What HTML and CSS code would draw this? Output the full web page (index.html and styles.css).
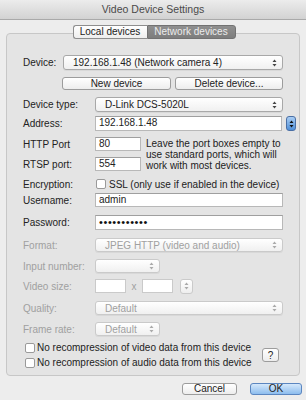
FILE: index.html
```html
<!DOCTYPE html>
<html lang="en">
<head>
  <meta charset="UTF-8" />
  <title>Video Device Settings</title>
  <link rel="stylesheet" href="styles.css">
</head>
<body>
  <div class="titlebar">Video Device Settings</div>

  <div class="panel">
    <div class="tabs">
      <span class="tab tab-local">Local devices</span><span class="tab tab-net selected">Network devices</span>
    </div>

    <div class="row r-device">
      <span class="lbl lbl-short">Device:</span>
      <div class="popup">192.168.1.48 (Network camera 4)<svg class="arrows" width="5" height="8" viewBox="0 0 5 8"><path d="M2.5 0.5 4.5 3H0.5Z M2.5 7.5 4.5 5H0.5Z"/></svg></div>
    </div>

    <div class="row r-buttons">
      <button class="btn btn-new">New device</button>
      <button class="btn btn-del">Delete device...</button>
    </div>

    <div class="row r-type">
      <span class="lbl">Device type:</span>
      <div class="popup">D-Link DCS-5020L<svg class="arrows" width="5" height="8" viewBox="0 0 5 8"><path d="M2.5 0.5 4.5 3H0.5Z M2.5 7.5 4.5 5H0.5Z"/></svg></div>
    </div>

    <div class="row r-address">
      <span class="lbl">Address:</span>
      <div class="field grow">192.168.1.48</div>
      <span class="stepper blue"><svg width="5" height="8" viewBox="0 0 5 8"><path d="M2.5 0.5 4.5 3H0.5Z M2.5 7.5 4.5 5H0.5Z"/></svg></span>
    </div>

    <div class="ports">
      <div class="port-rows">
        <div class="row r-http">
          <span class="lbl">HTTP Port</span>
          <div class="field port">80</div>
        </div>
        <div class="row r-rtsp">
          <span class="lbl">RTSP port:</span>
          <div class="field port">554</div>
        </div>
      </div>
      <p class="help">Leave the port boxes empty to use standard ports, which will work with most devices.</p>
    </div>

    <div class="row r-enc">
      <span class="lbl">Encryption:</span>
      <span class="check"></span>
      <span>SSL (only use if enabled in the device)</span>
    </div>

    <div class="row r-user">
      <span class="lbl">Username:</span>
      <div class="field grow">admin</div>
    </div>

    <div class="row r-pass">
      <span class="lbl">Password:</span>
      <div class="field grow dots">&#8226;&#8226;&#8226;&#8226;&#8226;&#8226;&#8226;&#8226;&#8226;&#8226;&#8226;</div>
    </div>

    <div class="row r-format off">
      <span class="lbl">Format:</span>
      <div class="popup">JPEG HTTP (video and audio)<svg class="arrows" width="5" height="8" viewBox="0 0 5 8"><path d="M2.5 0.5 4.5 3H0.5Z M2.5 7.5 4.5 5H0.5Z"/></svg></div>
    </div>

    <div class="row r-input off">
      <span class="lbl">Input number:</span>
      <div class="popup short"><span></span><svg class="arrows" width="5" height="8" viewBox="0 0 5 8"><path d="M2.5 0.5 4.5 3H0.5Z M2.5 7.5 4.5 5H0.5Z"/></svg></div>
    </div>

    <div class="row r-size off">
      <span class="lbl">Video size:</span>
      <div class="field size"></div>
      <span class="times">x</span>
      <div class="field size"></div>
      <span class="stepper"><svg width="5" height="8" viewBox="0 0 5 8"><path d="M2.5 0.5 4.5 3H0.5Z M2.5 7.5 4.5 5H0.5Z"/></svg></span>
    </div>

    <div class="row r-quality off">
      <span class="lbl">Quality:</span>
      <div class="popup">Default<svg class="arrows" width="5" height="8" viewBox="0 0 5 8"><path d="M2.5 0.5 4.5 3H0.5Z M2.5 7.5 4.5 5H0.5Z"/></svg></div>
    </div>

    <div class="row r-rate off">
      <span class="lbl">Frame rate:</span>
      <div class="popup short">Default<svg class="arrows" width="5" height="8" viewBox="0 0 5 8"><path d="M2.5 0.5 4.5 3H0.5Z M2.5 7.5 4.5 5H0.5Z"/></svg></div>
    </div>

    <div class="recompress">
      <div class="checks">
        <div class="row r-check"><span class="check"></span><span>No recompression of video data from this device</span></div>
        <div class="row r-check"><span class="check"></span><span>No recompression of audio data from this device</span></div>
      </div>
      <button class="btn help-btn">?</button>
    </div>
  </div>

  <div class="footer">
    <button class="btn btn-cancel">Cancel</button>
    <button class="btn btn-ok">OK</button>
  </div>
</body>
</html>
```

FILE: styles.css
```css
* {margin:0;padding:0;box-sizing:border-box}
body {
  width:306px;height:400px;overflow:hidden;background:#ededed;
  font:10px "Liberation Sans", Arial, sans-serif;color:#222;
}

.titlebar {
  height:20px;line-height:19px;text-align:center;color:#4a4a4a;font-size:10.5px;
  background:linear-gradient(#ececec,#d2d2d2);border-bottom:1px solid #a9a9a9;
}

.panel {
  margin:13px 6px 0;padding:0 16px 5px;
  border:1px solid #c7c7c7;border-radius:4px;background:#e4e4e4;
}
.tabs {display:flex;justify-content:center;margin:-9px 0 0 2px;height:14px}
.tab {
  height:14px;line-height:12px;text-align:center;font-size:10px;
  border:1px solid #8e8e8e;background:linear-gradient(#fff,#eee);
}
.tab-local {width:74px;border-radius:3px 0 0 3px;border-right:none}
.tab-net {width:89px;border-radius:0 3px 3px 0}
.tab.selected {background:linear-gradient(#8f8f8f,#7d7d7d);border-color:#727272;color:#ececec}

.row {display:flex;align-items:center;height:14px;margin-top:6px;white-space:nowrap}
.lbl {width:72px;flex:none}
.lbl-short {width:40px}

.r-device {height:15px;margin-top:16px}
.r-buttons {height:13px;margin-top:7px;padding-left:39px;gap:4px}
.r-type {height:15px;margin-top:7px}
.r-address {height:15px;margin-top:4px;margin-right:-13px}
.r-enc {margin-top:6px}
.r-user {margin-top:2px}
.r-pass {height:15px;margin-top:8px}
.r-format {margin-top:8px}
.r-input {margin-top:7px}
.r-size {margin-top:6px}
.r-quality {margin-top:8px}
.r-rate {margin-top:7px}

.popup {
  flex:1;height:100%;display:flex;align-items:center;justify-content:space-between;
  padding:0 5px 0 9px;border:1px solid #a8a8a8;border-radius:3px;
  background:linear-gradient(#fff,#f0f0f0);box-shadow:0 1px 0 rgba(0,0,0,.05);
}
.popup.short {flex:none;width:65px}
.arrows {fill:#444}

.field {
  height:100%;line-height:12px;padding-left:3px;background:#fff;
  border:1px solid #b8b8b8;border-top-color:#9f9f9f;
}
.grow {flex:1}
.dots {font-size:11px;letter-spacing:.6px;color:#111}
.port {width:46px}
.size {width:31px}
.times {width:16px;text-align:center}

.stepper {
  width:13px;height:15px;margin-left:7px;display:flex;align-items:center;justify-content:center;
  border:1px solid #b0b0b0;border-radius:3px;background:linear-gradient(#fff,#eee);
}
.stepper svg {fill:#555}
.stepper.blue {
  width:10px;margin-left:4px;border-color:#4a6fa5;
  background:linear-gradient(#a9cdf3,#4f8fd8);
}
.stepper.blue svg {fill:#111}

.ports {display:flex}
.port-rows .row {width:118px}
.help {margin:7px 0 0 5px;line-height:11px;width:142px}

.check {
  width:10px;height:10px;flex:none;margin-right:3px;background:#fff;
  border:1px solid #9a9a9a;border-radius:2px;
}
.r-enc .check {margin-left:1px}

.off {color:#a0a0a0}
.off .popup, .off .field, .off .stepper {border-color:#cacaca}
.off .arrows, .off .stepper svg {fill:#aaa}

.recompress {display:flex;align-items:center;margin-top:4px}
.checks {flex:1}
.r-check {height:15px;margin-top:0;padding-left:2px}
.r-check .check {margin-right:2px}

.btn {
  height:100%;font:inherit;color:#222;text-align:center;cursor:pointer;
  border:1px solid #9c9c9c;border-radius:3px;background:linear-gradient(#fff,#ededed);
}
.btn-new {width:109px}
.btn-del {width:108px}
.help-btn {width:17px;height:14px;margin-right:4px}

.footer {display:flex;justify-content:flex-end;gap:13px;padding:7px 4px 0}
.footer .btn {height:12px;line-height:10px}
.btn-cancel {width:55px}
.btn-ok {width:52px;border-color:#5b86c0;background:linear-gradient(#d5e8fb,#8dbdee)}
```
